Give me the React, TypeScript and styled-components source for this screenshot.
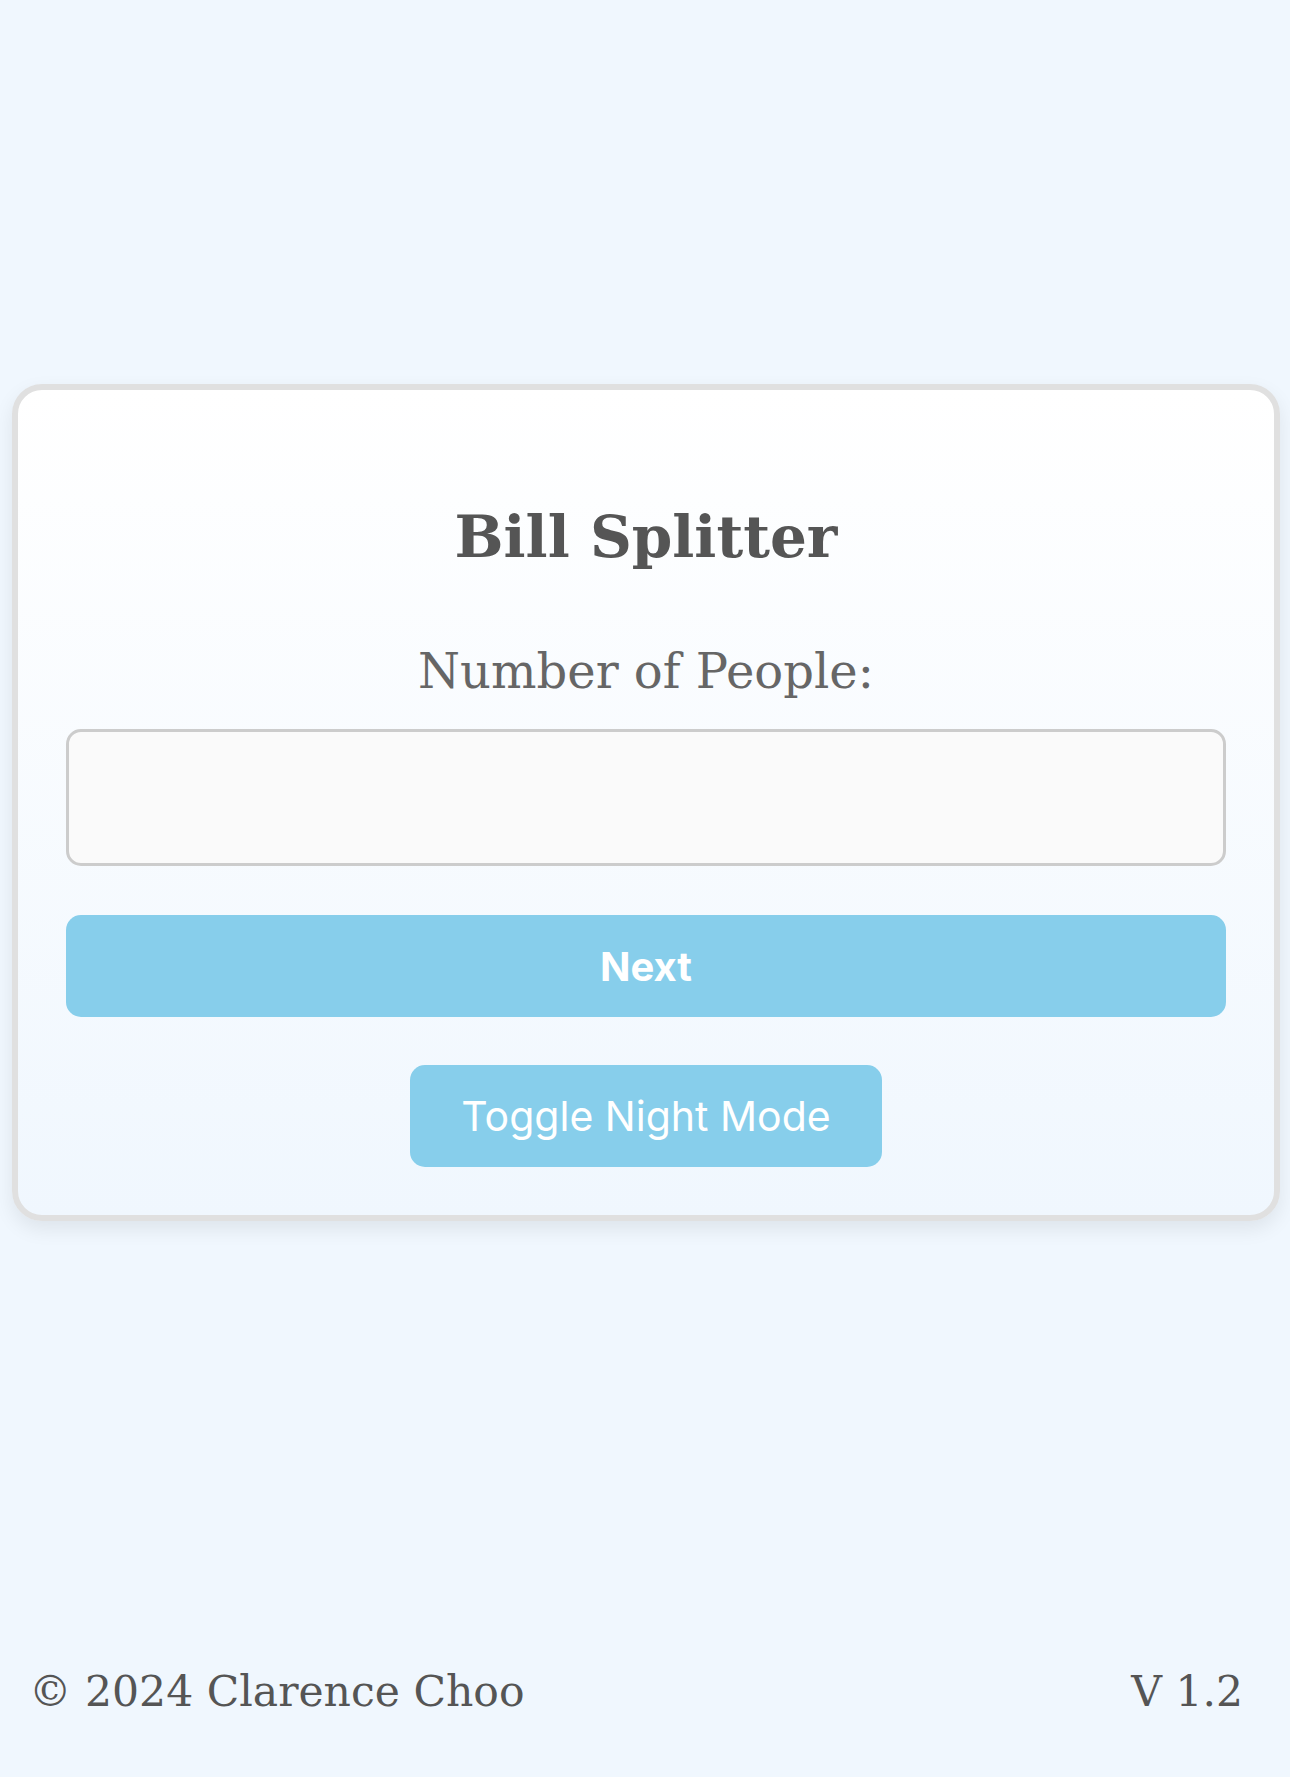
import React, { useState } from "react";
import styled, { createGlobalStyle } from "styled-components";

const GlobalStyle = createGlobalStyle`
  html, body {
    margin: 0;
    padding: 0;
    background: #f0f7fe;
  }
  * { box-sizing: border-box; }
`;

const Page = styled.div`
  min-height: 100vh;
  display: flex;
  flex-direction: column;
  background: #f0f7fe;
  font-family: "DejaVu Serif", "Liberation Serif", serif;
`;

const Main = styled.main`
  flex: 1;
  display: flex;
  align-items: center;
  justify-content: center;
  padding: 0 10px 0 12px;
`;

const Card = styled.section`
  width: 100%;
  border: 6px solid #e0e0e0;
  border-radius: 30px;
  background: linear-gradient(to bottom, #ffffff 0%, #f0f7fe 100%);
  box-shadow: 0 8px 20px rgba(0, 0, 0, 0.08);
  padding: 48px;
  display: flex;
  flex-direction: column;
  align-items: center;
`;

const Title = styled.h1`
  margin: 65px 0 0;
  font-family: "DejaVu Serif", "Liberation Serif", serif;
  font-weight: 700;
  font-size: 58px;
  line-height: 1.2;
  color: #555555;
  text-align: center;
`;

const Label = styled.label`
  margin-top: 70px;
  font-family: "DejaVu Serif", "Liberation Serif", serif;
  font-size: 48px;
  line-height: 1.2;
  color: #666666;
  text-align: center;
`;

const Input = styled.input`
  margin-top: 29px;
  width: 100%;
  height: 137px;
  border: 3px solid #cccccc;
  border-radius: 15px;
  background: #fafafa;
  font-size: 40px;
  padding: 0 24px;
  outline: none;
`;

const Button = styled.button<{ $primary?: boolean }>`
  margin-top: ${(p) => (p.$primary ? "49px" : "48px")};
  height: 102px;
  width: ${(p) => (p.$primary ? "100%" : "auto")};
  padding: 0 51px;
  border: none;
  border-radius: 15px;
  background: #87ceeb;
  color: #ffffff;
  font-family: Inter, "Noto Sans", sans-serif;
  font-weight: ${(p) => (p.$primary ? 700 : 400)};
  font-size: ${(p) => (p.$primary ? "40px" : "41px")};
  cursor: pointer;
`;

const Footer = styled.footer`
  height: 172px;
  display: flex;
  align-items: center;
  justify-content: space-between;
  padding: 0 47px 0 29px;
  font-family: "DejaVu Serif", "Liberation Serif", serif;
  font-size: 42.5px;
  color: #555555;
`;

export default function App() {
  const [count, setCount] = useState("");
  return (
    <>
      <GlobalStyle />
      <Page>
        <Main>
          <Card>
            <Title>Bill Splitter</Title>
            <Label htmlFor="people">Number of People:</Label>
            <Input
              id="people"
              type="number"
              value={count}
              onChange={(e) => setCount(e.target.value)}
            />
            <Button $primary>Next</Button>
            <Button>Toggle Night Mode</Button>
          </Card>
        </Main>
        <Footer>
          <span>© 2024 Clarence Choo</span>
          <span>V 1.2</span>
        </Footer>
      </Page>
    </>
  );
}
